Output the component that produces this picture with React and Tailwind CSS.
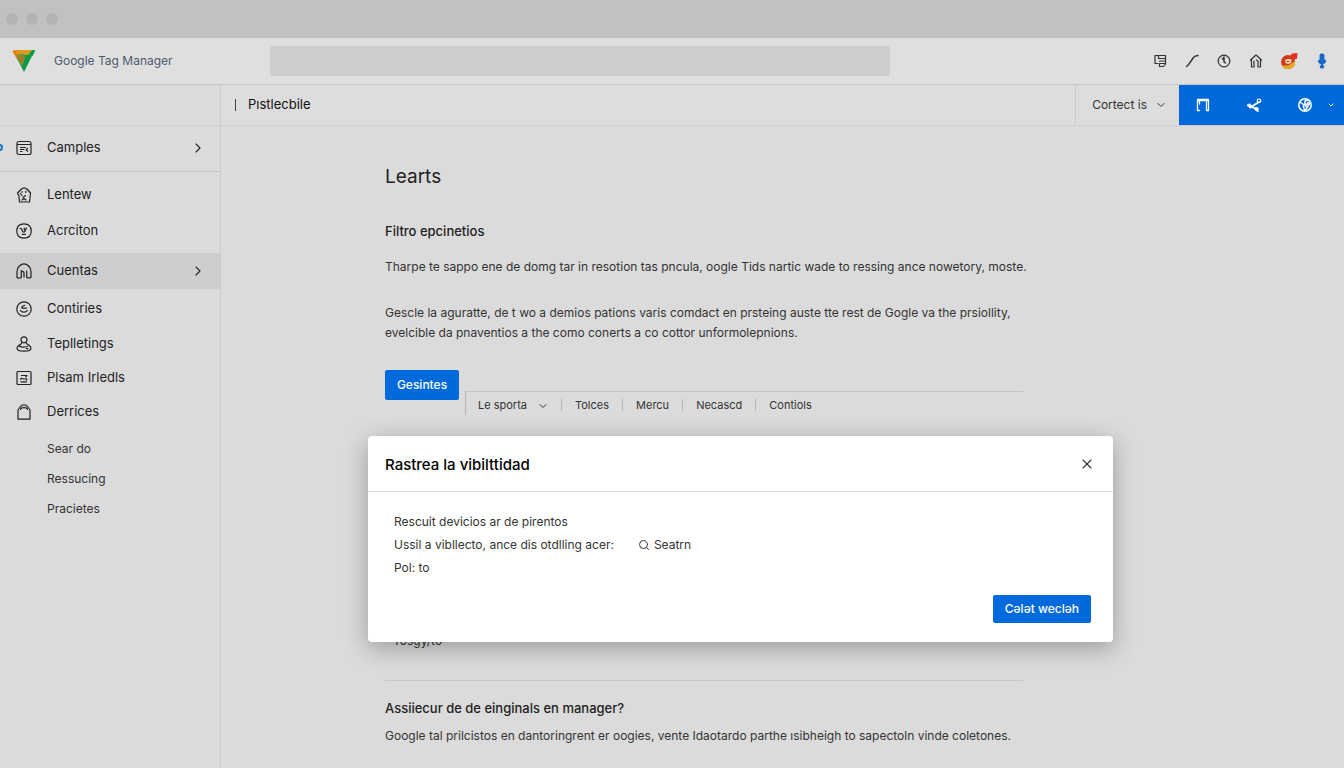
/**
 * App.jsx — Tag manager workspace with sidebar, article and a tracking dialog.
 */
import { ChevronDown, ChevronRight, Search, X } from 'lucide-react';

// Shared wrapper for the small line icons
const Icon = ({ children, className = 'size-4' }) => (
    <svg
        viewBox="0 0 16 16"
        className={className}
        fill="none"
        stroke="currentColor"
        strokeWidth="1.2"
        strokeLinecap="round"
        strokeLinejoin="round"
        aria-hidden="true"
    >
        {children}
    </svg>
);

const icons = {
    list: (
        <Icon>
            <rect x="1" y="1.5" width="14" height="13" rx="2" />
            <path d="M1.5 4.5h13M4.5 7.5h5M4.5 9.5H8M4.5 11.5h1.5M11.5 8.5l-1.3 1.5 1.5 1.2" />
        </Icon>
    ),
    house: (
        <Icon>
            <path d="M1.5 6 5.5 2 8 .8 11 2l3.5 4-1 9H3.500L3 9 1.5 6Z" />
            <path d="M6 4.5v.8M9.8 4v1.500M4.500 6.500 6 8.500M9.500 8.500 7 10.500M6 13l2-1.500L10 13" />
        </Icon>
    ),
    face: (
        <Icon>
            <path d="M8 .8c5 0 7.200 2.700 7.200 7.200S13 15.200 8 15.200.8 12.500.8 8 3 .8 8 .8Z" />
            <path d="M4 5.500h1.200L7 9h1.500L10.500 5M8.300 5v2M6.300 11.300h3" />
        </Icon>
    ),
    arch: (
        <Icon>
            <path d="M5.300 14.500c-1.300.6-3.300.6-4.300 0V8.500C1 4 5 .8 8 .8s7 3.200 7 7.700v6c-1.300.5-3.300.5-4.300 0V8M5.300 14.500V7.500M5.300 8c1.200 0 2.700.8 2.700 2.200V14" />
        </Icon>
    ),
    coin: (
        <Icon>
            <circle cx="8" cy="8" r="7.2" />
            <path d="M8.800 4.300 6 5.500v1.700h4.500M4.500 9.500C5.500 11.500 10 11.700 11.300 9.500" />
        </Icon>
    ),
    person: (
        <Icon>
            <circle cx="8" cy="3.8" r="3" />
            <path d="M5.800 6.500C6.500 8.500 1 8.800 1 12.300c0 2.500 2.600 2.900 7 2.900s7-.4 7-2.900c0-3.500-5.500-3.800-4.800-5.800M3.500 10.300c2.500 1.500 6 .8 8 .2M10.500 12.700H12" />
        </Icon>
    ),
    frame: (
        <Icon>
            <rect x="1" y="1.5" width="14" height="13" rx="1" />
            <path d="M5.500 5.500H11L9.800 7M4.500 9.300C5.800 7.300 7 9.300 8.700 9c1.600-.4 2.500.2 2 1.200M5 11.800h5.500" />
        </Icon>
    ),
    bag: (
        <Icon>
            <path d="M2 6v9.200h12V6L11.500 2.500C9.500.3 6.500.3 4.500 2.500L2 6ZM4.500 5.500C5 3 11 3 11.500 5.500" />
        </Icon>
    ),
};

const primaryItems = [
    { label: 'Lentew', icon: 'house', row: 'h-9' },
    { label: 'Acrciton', icon: 'face', row: 'h-9' },
    { label: 'Cuentas', icon: 'arch', row: 'h-9 mt-1 bg-[#cecece]', arrow: true },
    { label: 'Contiries', icon: 'coin', row: 'h-9 mt-0.5' },
    { label: 'Teplletings', icon: 'person', row: 'h-[34px]' },
    { label: 'Plsam Irledls', icon: 'frame', row: 'h-[34px]' },
    { label: 'Derrices', icon: 'bag', row: 'h-[34px]' },
];

const subItems = ['Sear do', 'Ressucing', 'Pracietes'];

const tabs = ['Tolces', 'Mercu', 'Necascd', 'Contiols'];

const TopBar = () => (
    <header>
        <div className="flex h-[38px] items-center gap-2 bg-[#c1c1c1] px-1.5">
            <span className="size-3 rounded-full bg-[#b2b3b3]" />
            <span className="size-3 rounded-full bg-[#b2b3b3]" />
            <span className="size-3 rounded-full bg-[#b2b3b3]" />
        </div>
        <div className="flex h-[47px] items-center border-b border-[#c6c6c6] bg-[#dfdfdf] pr-3.5 pl-3">
            <svg viewBox="0 0 24 24" className="size-6" aria-hidden="true">
                <path d="M1 2h21.5L12 23Z" fill="#0b9a48" />
                <path d="M1 1h20.5l-2 4.500L4 6.500Z" fill="#dd9a1c" />
                <path d="M16.500 5 20.500 1h1.500c1 0 1.200 1 .8 1.800L20.500 7Z" fill="#0b9a48" />
                <path d="M3 5.500 12 5l1 5-2.500 7-1 0Z" fill="#7f8f2e" />
                <path d="M.3 2 4 2.500 6 8.500l-1.300 1Z" fill="#e27a1b" />
                <path d="m7 7 2 2-1.500 2M10 7.500l.8 3L9.500 13v2" stroke="#c96a24" fill="none" />
            </svg>
            <span className="ml-[18px] w-[216px] text-[12px] text-[#4d5a6b]">Google Tag Manager</span>
            <input
                type="search"
                aria-label="Search"
                className="h-[30px] w-[620px] rounded-[3px] bg-[#cdcdcd] px-3 text-sm outline-none"
            />
            <div className="ml-auto flex items-center gap-4 text-[#333]">
                <button type="button" aria-label="Notes">
                    <Icon>
                        <path d="M6 10.500H3V2.500h10.500v8.500l-2 2.500h-4V10.500M6.500 2.500v3H13M7.500 8H13M7.500 10.500H13" />
                    </Icon>
                </button>
                <button type="button" aria-label="Trend">
                    <Icon>
                        <path d="M2.500 13.500C6 11 7.500 6 10.500 3.500c1-.8 2-.7 3.500-1" strokeWidth="1.5" />
                    </Icon>
                </button>
                <button type="button" aria-label="History">
                    <Icon>
                        <circle cx="8" cy="8" r="5.8" />
                        <path d="M8 4v5l1.500 1M6.500 6 8 4.500" strokeWidth="1.5" />
                    </Icon>
                </button>
                <button type="button" aria-label="Home">
                    <Icon>
                        <path d="M2.500 7 8 2l5.500 5M3.500 6.500V14H6V8M12.500 6.500V14H10V8L8.500 7" />
                    </Icon>
                </button>
                <button type="button" aria-label="Account">
                    <svg viewBox="0 0 18 18" className="size-[18px]" aria-hidden="true">
                        <circle cx="8" cy="10" r="7" fill="#cf3a1e" />
                        <path d="M2 13.500a7 7 0 0 0 13-4.500l-3 2-4 2.500Z" fill="#e0a824" />
                        <path d="m10.500 3 2-1.500 5-.5-.5 5.500-3.500 1.500Z" fill="#e4301f" />
                        <path d="m5 8 3-1 3.500.5L11 11l-3 1-2.500-1Z" fill="#f7dfae" />
                        <path d="M6.500 9.500h3" stroke="#c6321f" fill="none" />
                    </svg>
                </button>
                <button type="button" aria-label="Voice" className="text-[#1768c4]">
                    <svg viewBox="0 0 16 16" className="size-4" fill="currentColor" aria-hidden="true">
                        <rect x="5.5" y="0.5" width="5" height="9" rx="2" />
                        <path d="M4 7h8c.5 2.500-1.500 4-3 4.300V12.500h1.500L9.500 15.500h-3L5.500 12.500H7V11.300C5.500 11 3.500 9.500 4 7Z" />
                    </svg>
                </button>
            </div>
        </div>
    </header>
);

const Sidebar = () => (
    <nav className="w-[221px] shrink-0 border-r border-[#cbcbcb] text-[13px] text-[#222]">
        <div className="h-[41px] border-b border-[#d0d0d0]" />
        <a href="#" className="relative flex h-[46px] items-center border-b border-[#c2c2c2] pr-3.5 pb-0.5 pl-4">
            <span className="absolute -left-1 size-[7px] rounded-full border-2 border-[#1b74c9]" />
            {icons.list}
            <span className="ml-[15px]">Camples</span>
            <ChevronRight className="ml-auto size-4" strokeWidth={1.6} />
        </a>
        <div className="pt-[5px]">
            {primaryItems.map((item) => (
                <a key={item.label} href="#" className={`flex items-center pr-3.5 pl-4 ${item.row}`}>
                    {icons[item.icon]}
                    <span className="ml-[15px]">{item.label}</span>
                    {item.arrow && <ChevronRight className="ml-auto size-4" strokeWidth={1.6} />}
                </a>
            ))}
        </div>
        <div className="pt-[5px] pl-[47px] text-[12px] text-[#333]">
            {subItems.map((label) => (
                <a key={label} href="#" className="flex h-[30px] items-center">
                    {label}
                </a>
            ))}
        </div>
    </nav>
);

const WorkspaceBar = () => (
    <div className="flex h-[41px] items-center border-b border-[#cdcdcd] bg-[#dddddd]">
        <span className="ml-3.5 h-3 w-px bg-[#444]" />
        <span className="ml-3 text-[13px] text-[#111]">Pıstlecbile</span>
        <button
            type="button"
            className="ml-auto flex h-full items-center gap-2 border-l border-[#cbcbcb] pr-3 pl-4 text-[12px] text-[#333]"
        >
            Cortect is
            <ChevronDown className="size-3" />
        </button>
        <div className="flex h-full w-[165px] items-center bg-[#0069d9] pl-4 text-white">
            <button type="button" aria-label="Layout">
                <Icon>
                    <path d="M4.500 13.500H2.500V2.500h11V13.500h-2V4M2.500 3.500h11M4.500 4v3" strokeWidth="1.3" />
                </Icon>
            </button>
            <button type="button" aria-label="Share" className="ml-[35px]">
                <Icon>
                    <path d="M2 8.500 5 10l8-5M6 10l5 2.500" strokeWidth="1.8" />
                    <circle cx="13" cy="3.8" r="1.8" />
                    <path d="m1.500 8 2-1 2 2L4.500 11Z" fill="currentColor" />
                    <path d="m9.500 10.500 2.500.5v3.500L9 12.500Z" fill="currentColor" />
                </Icon>
            </button>
            <button type="button" aria-label="Language" className="ml-[35px]">
                <Icon>
                    <circle cx="8" cy="8" r="6.2" strokeWidth="1.5" />
                    <path d="m3.500 5.500 3 2v3l1.500 3M8 8V4l3-1M8.500 9.500 11 5.500l1.500 1L9 12.500" strokeWidth="1.5" />
                </Icon>
            </button>
            <button type="button" aria-label="More" className="ml-3.5">
                <ChevronDown className="size-2" strokeWidth={3} />
            </button>
        </div>
    </div>
);

const Dialog = () => (
    <section
        role="dialog"
        aria-labelledby="dialog-title"
        className="absolute top-[310px] left-[147px] w-[745px] rounded bg-white shadow-[0_6px_24px_rgba(0,0,0,0.3)]"
    >
        <div className="flex h-14 items-center justify-between border-b border-[#dedede] pr-[18px] pl-[17px]">
            <h2 id="dialog-title" className="pt-1 text-[15px] font-medium text-black">
                Rastrea la vibilttidad
            </h2>
            <button type="button" aria-label="Close" className="text-[#333]">
                <X className="size-4" strokeWidth={1.6} />
            </button>
        </div>
        <div className="px-[26px] pt-[18px] text-[12px] leading-[23px] text-[#333]">
            <p>Rescuit devicios ar de pirentos</p>
            <div className="flex items-center">
                <p>Ussil a vibllecto, ance dis otdlling acer:</p>
                <button type="button" className="ml-6 flex items-center gap-1">
                    <Search className="size-3" />
                    Seatrn
                </button>
            </div>
            <p>Pol: to</p>
        </div>
        <div className="flex justify-end pt-4 pr-[22px] pb-[19px]">
            <button type="button" className="h-7 rounded-xs bg-[#0069dc] px-3 text-[12px] font-medium text-white">
                Cələt wecləh
            </button>
        </div>
    </section>
);

const Article = () => (
    <article className="ml-[164px] max-w-[638px] text-[12px] text-[#333]">
        <h1 className="pt-[37px] text-[19px] leading-7 text-[#222]">Learts</h1>
        <h2 className="mt-[30px] text-[13px] leading-5 font-medium text-[#222]">Filtro epcinetios</h2>
        <p className="mt-4 leading-5 whitespace-nowrap">
            Tharpe te sappo ene de domg tar in resotion tas pncula, oogle Tids nartic wade to ressing ance nowetory, moste.
        </p>
        <p className="mt-[26px] leading-5 whitespace-nowrap">
            Gescle la aguratte, de t wo a demios pations varis comdact en prsteing auste tte rest de Gogle va the prsiollity,
            <br />
            evelcible da pnaventios a the como conerts a co cottor unformolepnions.
        </p>
        <div className="mt-[27px] flex items-start gap-1.5">
            <button type="button" className="h-[30px] w-[74px] rounded-xs bg-[#0069dc] text-[12px] font-medium text-white">
                Gesintes
            </button>
            <div className="mt-[21px] flex h-6 grow items-end border-t border-[#c4c4c4] text-[11px]">
                <button type="button" className="flex h-full items-center gap-2.5 border-l border-[#b5b5b5] px-3 pt-1">
                    Le sporta
                    <ChevronDown className="size-3" />
                </button>
                {tabs.map((tab) => (
                    <button key={tab} type="button" className="flex h-5 items-center">
                        <span className="h-3 w-px bg-[#b5b5b5]" />
                        <span className="px-[13px]">{tab}</span>
                    </button>
                ))}
            </div>
        </div>
        <p className="mt-[216px] pl-2 leading-5">Tosgy/to</p>
        <h2 className="mt-[29px] border-t border-[#c8c8c8] pt-[17px] text-[13px] leading-5 font-medium text-[#222]">
            Assiiecur de de einginals en manager?
        </h2>
        <p className="mt-2 leading-5 whitespace-nowrap">
            Google tal prilcistos en dantoringrent er oogies, vente Idaotardo parthe ısibheigh to sapectoln vinde coletones.
        </p>
    </article>
);

const App = () => (
    <div className="flex min-h-screen flex-col bg-[#dbdbdb] font-[Inter,'Liberation_Sans',sans-serif]">
        <TopBar />
        <div className="flex grow">
            <Sidebar />
            <main className="min-w-0 grow">
                <WorkspaceBar />
                <div className="relative">
                    <Article />
                    <Dialog />
                </div>
            </main>
        </div>
    </div>
);

export default App;
